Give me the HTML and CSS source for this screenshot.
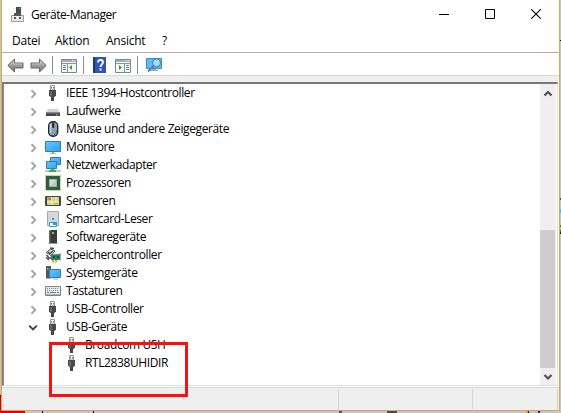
FILE: index.html
```html
<!DOCTYPE html>
<html lang="de">
<head>
<meta charset="utf-8">
<title>Geräte-Manager</title>
<link rel="stylesheet" href="styles.css">
</head>
<body>
<svg class="defs" width="0" height="0">
  <defs>
    <linearGradient id="blue" x1="0" y1="0" x2="1" y2="1"><stop offset="0" stop-color="#66c4ff"/><stop offset="1" stop-color="#2aa5f7"/></linearGradient>
    <linearGradient id="grey" x1="0" y1="0" x2="0" y2="1"><stop offset="0" stop-color="#c0c0c0"/><stop offset="1" stop-color="#777"/></linearGradient>
    <symbol id="chev" viewBox="0 0 8 10"><path d="M1.500 1.200 5.300 5 1.500 8.800" fill="none" stroke="#a6a6a6" stroke-width="2"/></symbol>
    <symbol id="usb" viewBox="0 0 16 16"><path d="M5.500.5h4V5h-4z" fill="#f4f4f4" stroke="#999"/><path d="M6 2h1v1.500H6zM8 2h1v1.500H8z" fill="#777"/><path d="M4 5h7v5.500L9.500 12h-4L4 10.500z" fill="#4a4a4a"/><path d="M5 6h2v5H5z" fill="#666"/><path d="M6 12h3v4H6z" fill="#444"/></symbol>
    <symbol id="drive" viewBox="0 0 16 16"><path d="M3 6h10l2 3.500H1z" fill="#d2d2d2"/><path d="M1 9.500h14V13H1z" fill="#444"/><path d="M1 9.500h14v1H1z" fill="#777"/><path d="M11 11h1.500v1.500H11z" fill="#2dea45"/></symbol>
    <symbol id="mouse" viewBox="0 0 16 16"><rect x="3.700" y=".7" width="9" height="14.600" rx="4" fill="#8ca0b4" stroke="#252c35" stroke-width="1.400"/><path d="M5.500 3v9" stroke="#c8d6e2" stroke-width="1.500"/><rect x="7.200" y="1.500" width="2" height="5.500" rx="1" fill="#20262e"/><path d="M9 13.500c2 0 2.500-2 2.500-4" fill="none" stroke="#596b7d"/></symbol>
    <symbol id="mon" viewBox="0 0 16 16"><path d="M.5 2.500h15v10H.5z" fill="url(#blue)" stroke="#3a7ca8"/><path d="M7 13h2v1H7z" fill="#999"/><path d="M5 14h6v1H5z" fill="#aab4ba"/></symbol>
    <symbol id="net" viewBox="0 0 16 16"><path d="M5.500.5h10v7h-10z" fill="url(#blue)" stroke="#337aa8"/><path d="M1.500 4.500h10v7h-10z" fill="url(#blue)" stroke="#337aa8"/><path d="M0 13h16v2H0z" fill="#c5cac5"/><path d="M6 11.500h3v1.500h2v2H4v-2h2z" fill="#32b34a"/></symbol>
    <symbol id="cpu" viewBox="0 0 16 16"><rect x=".5" y=".5" width="15" height="15" fill="none" stroke="#b59a42" stroke-dasharray="1 1"/><path d="M1 1h14v14H1z" fill="#295f45"/><path d="M4.500 4.500h7v7h-7z" fill="#d9d9d9" stroke="#9cb5a5"/><path d="M5 11 11 5v6z" fill="#c4c4c4"/></symbol>
    <symbol id="sens" viewBox="0 0 16 16"><rect y="3" width="16" height="10" rx="1" fill="#464646"/><path d="M2 4h12v8H2z" fill="#c5d78b"/><path d="M2 9h12M6.500 4v8M11 4v5" stroke="#f3e7a7" stroke-width="1.300"/><path d="M2 4h3v3H2z" fill="#8dbb71"/><path d="M4 5h2v2H4z" fill="#e45448"/><path d="M9 10h4v1H9z" fill="#8dbb71"/></symbol>
    <symbol id="card" viewBox="0 0 16 16"><path d="M2.500.5h11v14h-11z" fill="#d5d8da" stroke="#a5a8aa"/><path d="M7 7h2v2H7z" fill="#2d9ee0"/><path d="M4.500 11.500h7v4h-7z" fill="#fff" stroke="#269ce2"/><path d="M8 11h4v3H8z" fill="#269ce2"/></symbol>
    <symbol id="soft" viewBox="0 0 16 16"><path d="M4 1.500h2V1h6v13H4z" fill="#3c3c3c"/><path d="M4 1.500h1.500V14H4z" fill="#666"/><path d="M7 3h2v2H7z" fill="#38ee42"/><path d="M3.500 14h9v1h-9z" fill="#999"/></symbol>
    <symbol id="stor" viewBox="0 0 16 16"><path d="M1 5.500 5.500 2 10 4 6 8.500z" fill="#ddd" stroke="#555"/><path d="M9 1.500 5 1M3 5l2 1.500L8 4M1.500 8 4 11h3M1 10.500 4 13" fill="none" stroke="#444" stroke-width="1.300"/><path d="M6 7.500 15 7v6H6z" fill="#278264"/><path d="M8 9h2v2H8zM12 9h2v2h-2z" fill="#184d3f"/><path d="M7 13h2v2.500H7zM10 13h2v2.500h-2z" fill="#efa126"/><path d="M15.500 6v8" stroke="#aaa"/></symbol>
    <symbol id="sys" viewBox="0 0 16 16"><path d="M1 1h5v12H1z" fill="#555"/><path d="M2 3h1.500v1.500H2z" fill="#45ef55"/><path d="M4.500 4.500h11v8h-11z" fill="url(#blue)" stroke="#3a7ca8"/><path d="M1 13h5v1H1zM8 13.500h5v1H8z" fill="#aaa"/></symbol>
    <symbol id="keys" viewBox="0 0 16 16"><path d="M.5 3.500h15v9H.5z" fill="#e8eaed" stroke="#7b838c"/><path d="M2 5.500h12M2 7.500h12" stroke="#838b95" stroke-dasharray="1 1"/><path d="M2 9.500h2m1 0h6m1 0h2" stroke="#707780"/><path d="M1 11.500h14" stroke="#a9afb6"/></symbol>
    <symbol id="arrow" viewBox="0 0 17 15"><path d="M.8 7.500 7.500 1v4H16v5H7.500v4z" fill="url(#grey)" stroke="#666"/><path d="M3 7 6.500 3.500V6H15" fill="none" stroke="#ccc" stroke-width=".8"/></symbol>
    <symbol id="pane" viewBox="0 0 16 14"><path d="M.5.5h15v13H.5z" fill="#f4f5f6" stroke="#7d8791"/><path d="M1 1h14v2H1z" fill="#a4acb5"/><path d="M11 1h1v1h-1zM13 1h1v1h-1z" fill="#fff"/><path d="M1 4.500h14" stroke="#8b949d"/></symbol>
  </defs>
</svg>
<div class="screen">
  <div class="window">
    <header class="title">
      <svg class="appicon" viewBox="0 0 14 15"><path d="M5 0h5v8H5z" fill="#454b50"/><path d="M8 1h1v1H8z" fill="#35e956"/><path d="M.5 8.500h12v6H.5z" fill="#e9e9e9" stroke="#9b9b9b"/><path d="M3 6h7v3H3z" fill="#555"/><path d="M3 10h2v2H3zM8 10h2v2H8z" fill="#555"/></svg>
      <h1>Geräte-Manager</h1>
      <div class="controls">
        <svg viewBox="0 0 10 10"><path d="M0 5.500h10" stroke="#000"/></svg>
        <svg viewBox="0 0 10 10"><path d="M.5.5h9v9h-9z" fill="none" stroke="#000"/></svg>
        <svg viewBox="0 0 10 10"><path d="m.3.300 9.400 9.400m0-9.400L.3 9.700" stroke="#000" stroke-width="1.100"/></svg>
      </div>
    </header>
    <nav class="menu"><span class="m1">Datei</span><span class="m2">Aktion</span><span class="m3">Ansicht</span><span>?</span></nav>
    <div class="toolbar">
      <svg class="arrow"><use href="#arrow"/></svg>
      <svg class="arrow fwd"><use href="#arrow"/></svg>
      <i class="sep s1"></i>
      <svg class="pane" viewBox="0 0 16 14"><use href="#pane" width="16" height="14"/><path d="M6.500 5v8" stroke="#8b949d"/><path d="M2 6.500h3M2 8.500h3M2 10.500h3" stroke="#6b7f93"/><path d="M11 6v5L8 8.500z" fill="#2aa52a"/></svg>
      <i class="sep s2"></i>
      <svg class="help" viewBox="0 0 13 16"><path d="M0 0h13v16H0z" fill="#2f55b8"/><path d="M0 0h2v16H0z" fill="#1c3686"/><path d="M5 5.500C5 2 10 2.300 10 5.300c0 2-2.500 2.200-2.500 4.700" fill="none" stroke="#fff" stroke-width="1.900"/><path d="M6.500 11.500h2v2h-2z" fill="#fff"/></svg>
      <svg class="pane p2" viewBox="0 0 16 14"><use href="#pane" width="16" height="14"/><path d="M9.500 5v8" stroke="#8b949d"/><path d="M11 6.500h3M11 8.500h3M11 10.500h3" stroke="#6b7f93"/><path d="M4 6v5l3-2.500z" fill="#2aa52a"/></svg>
      <i class="sep s3"></i>
      <svg class="scan" viewBox="0 0 17 16"><path d="M.5 1.500h15v10H.5z" fill="#58bdf4" stroke="#3a8fc0"/><path d="M6 12h4v1h2v1H4v-1h2z" fill="#9aa6ae"/><path d="m8 8.500-6 6" stroke="#547e9d" stroke-width="1.800"/><circle cx="10.500" cy="5.800" r="4" fill="#a3dcfa" stroke="#437da4"/></svg>
    </div>
    <main class="content">
      <ul class="tree">
        <li><svg class="chev"><use href="#chev"/></svg><svg class="ico"><use href="#usb"/></svg><span>IEEE 1394-Hostcontroller</span></li>
        <li><svg class="chev"><use href="#chev"/></svg><svg class="ico"><use href="#drive"/></svg><span>Laufwerke</span></li>
        <li><svg class="chev"><use href="#chev"/></svg><svg class="ico"><use href="#mouse"/></svg><span>Mäuse und andere Zeigegeräte</span></li>
        <li><svg class="chev"><use href="#chev"/></svg><svg class="ico"><use href="#mon"/></svg><span>Monitore</span></li>
        <li><svg class="chev"><use href="#chev"/></svg><svg class="ico"><use href="#net"/></svg><span>Netzwerkadapter</span></li>
        <li><svg class="chev"><use href="#chev"/></svg><svg class="ico"><use href="#cpu"/></svg><span>Prozessoren</span></li>
        <li><svg class="chev"><use href="#chev"/></svg><svg class="ico"><use href="#sens"/></svg><span>Sensoren</span></li>
        <li><svg class="chev"><use href="#chev"/></svg><svg class="ico"><use href="#card"/></svg><span>Smartcard-Leser</span></li>
        <li><svg class="chev"><use href="#chev"/></svg><svg class="ico"><use href="#soft"/></svg><span>Softwaregeräte</span></li>
        <li><svg class="chev"><use href="#chev"/></svg><svg class="ico"><use href="#stor"/></svg><span>Speichercontroller</span></li>
        <li><svg class="chev"><use href="#chev"/></svg><svg class="ico"><use href="#sys"/></svg><span>Systemgeräte</span></li>
        <li><svg class="chev"><use href="#chev"/></svg><svg class="ico"><use href="#keys"/></svg><span>Tastaturen</span></li>
        <li><svg class="chev"><use href="#chev"/></svg><svg class="ico"><use href="#usb"/></svg><span>USB-Controller</span></li>
        <li><svg class="chev open" viewBox="0 0 10 10"><path d="M1.200 2.700 5 6.500l3.800-3.800" fill="none" stroke="#404040" stroke-width="1.900"/></svg><svg class="ico"><use href="#usb"/></svg><span>USB-Geräte</span></li>
        <li class="child"><svg class="ico"><use href="#usb"/></svg><span>Broadcom USH</span></li>
        <li class="child"><svg class="ico"><use href="#usb"/></svg><span>RTL2838UHIDIR</span></li>
      </ul>
      <div class="scroll">
        <svg viewBox="0 0 15 17"><path d="m4.500 11.500 3.500-3.500 3.500 3.500" fill="none" stroke="#505050" stroke-width="2.200"/></svg>
        <div class="thumb"></div>
        <svg viewBox="0 0 15 17"><path d="m4.500 7 3.500 3.500L11.500 7" fill="none" stroke="#505050" stroke-width="2.200"/></svg>
      </div>
    </main>
    <footer class="status"><i class="f1"></i><i class="f2"></i><i class="f3"></i></footer>
  </div>
  <div class="mark"></div>
</div>
</body>
</html>
```
FILE: styles.css
```css
* { box-sizing: border-box; }
body { margin: 0; overflow: hidden; }
svg { display: block; flex: none; }
.defs { position: absolute; }
.screen {
  position: relative;
  width: 561px;
  height: 413px;
  padding: 0 1px 2px;
  background:
    linear-gradient(#e00000, #e00000) 0 396px / 25px 17px no-repeat,
    linear-gradient(#111, #111) 0 395px / 1px 1px no-repeat,
    linear-gradient(#111, #111) 42px 411px / 1px 2px no-repeat,
    linear-gradient(#111, #111) 93px 411px / 1px 2px no-repeat,
    linear-gradient(#555, #555) 339px 411px / 3px 2px no-repeat,
    linear-gradient(#444b55, #444b55) 387px 411px / 10px 2px no-repeat,
    linear-gradient(90deg, #e99a2b 2px, #102850 2px 3px, #c5c5c5 3px 12px, #102850 12px 14px) 526px 411px / 14px 2px no-repeat,
    linear-gradient(#111, #111) 560px 40px / 1px 1px no-repeat,
    linear-gradient(#555, #555) 560px 198px / 1px 2px no-repeat,
    linear-gradient(#50bce8, #50bce8) 560px 209px / 1px 4px no-repeat,
    linear-gradient(#338066 2px, #e2b44b 2px 5px, #338066 5px 7px, #222 7px) 560px 225px / 1px 9px no-repeat,
    #c5c5c5;
  font-family: "Open Sans", "Noto Sans", sans-serif;
  font-size: 12px;
  color: #000;
}
.window {
  width: 559px;
  height: 411px;
  display: flex;
  flex-direction: column;
  background: linear-gradient(#efefef, #efefef) 0 76px / 100% 6px no-repeat #fff;
  border: 1px solid #dca456;
  border-top: 0;
}
.title { height: 30px; display: flex; align-items: center; padding-left: 9px; }
.appicon { width: 14px; height: 15px; margin-top: -2px; }
.title h1 { margin: 0 0 0 6px; font-size: 12px; font-weight: 400; line-height: 18px; letter-spacing: -.45px; }
.controls { margin: -2px 18px 0 auto; display: flex; gap: 36px; }
.controls svg { width: 10px; height: 10px; }
.menu { height: 23px; display: flex; border-bottom: 1px solid #aeaeae; padding-left: 10px; line-height: 22px; letter-spacing: -.25px; }
.m1 { width: 43px; }
.m2 { width: 51px; }
.m3 { width: 56px; }
.toolbar { height: 23px; display: flex; align-items: center; padding: 2px 0 0 5px; border-bottom: 1px solid #d7d7d7; }
.arrow { width: 17px; height: 15px; }
.fwd { transform: scaleX(-1); margin-left: 6px; }
.sep { width: 1px; height: 18px; background: #8c8c8c; flex: none; }
.s1 { margin: 0 8px 0 5px; }
.pane { width: 16px; height: 14px; margin-top: 2px; }
.s2 { margin: 0 9px 0 6px; }
.help { width: 13px; height: 16px; }
.p2 { margin-left: 9px; }
.s3 { margin: 0 8px 0 6px; }
.scan { width: 17px; height: 16px; }
.content {
  height: 304px;
  margin-top: 6px;
  margin-right: 1px;
  display: flex;
  background: #fff;
  border: 1px solid #dedede;
  border-top: 2px solid #777;
  border-left: 2px solid #858585;
}
.tree { flex: 1; list-style: none; margin: 0; padding: 0 0 0 26px; overflow: hidden; }
.tree li { height: 18px; display: flex; align-items: center; line-height: 18px; white-space: nowrap; letter-spacing: -.4px; }
.chev { width: 8px; height: 10px; margin: 2px 7px 0 0; }
.chev.open { width: 10px; margin: 2px 7px 0 -2px; }
.ico { width: 16px; height: 16px; margin-right: 5px; }
.tree .child { padding-left: 34px; }
.scroll { width: 16px; margin-right: 1px; display: flex; flex-direction: column; background: #efefef; }
.scroll svg { width: 15px; height: 17px; }
.thumb { height: 138px; width: 15px; margin-top: auto; background: #cdcdcd; }
.status { height: 23px; margin-top: 1px; border-top: 1px solid #d7d7d7; background: #efefef; display: flex; padding-top: 1px; }
.status i { height: 20px; border-right: 1px solid #d4d4d4; }
.f1 { width: 337px; }
.f2 { width: 134px; }
.f3 { width: 85px; }
.mark { position: absolute; left: 49px; top: 342px; width: 139px; height: 55px; border: 3px solid #fb1010; }
```
